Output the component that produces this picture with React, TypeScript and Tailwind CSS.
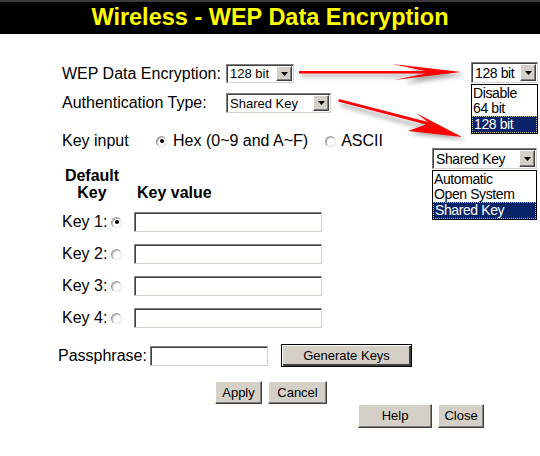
import React from "react";

const F = "font-['Liberation_Sans',Arial,sans-serif]";

function ArrowBtn({ h }: { h: number }) {
  return (
    <span
      className="flex shrink-0 items-center justify-center w-[16px] bg-[#d4d0c8] border border-t-white border-l-white border-r-[#404040] border-b-[#404040] shadow-[inset_-1px_-1px_0_#808080]"
      style={{ height: h }}
    >
      <svg width="7" height="4" viewBox="0 0 7 4">
        <polygon points="0,0 7,0 3.5,4" fill="#000" />
      </svg>
    </span>
  );
}

function Select({ w, h, text, size }: { w: number; h: number; text: string; size: string }) {
  return (
    <div
      className={`flex items-center justify-between bg-white border border-t-[#808080] border-l-[#808080] border-r-[#d4d0c8] border-b-[#d4d0c8] shadow-[inset_1px_1px_0_#404040] pl-[3px] pr-[1px] ${size}`}
      style={{ width: w, height: h }}
    >
      <span className="leading-none text-black whitespace-nowrap">{text}</span>
      <ArrowBtn h={h - 4} />
    </div>
  );
}

function TextInput({ w }: { w: number }) {
  return (
    <div
      className="h-[20px] bg-white border border-t-[#808080] border-l-[#808080] border-r-[#d4d0c8] border-b-[#d4d0c8] shadow-[inset_1px_1px_0_#404040]"
      style={{ width: w }}
    />
  );
}

function Radio({ checked }: { checked?: boolean }) {
  return (
    <span className="relative inline-flex items-center justify-center w-[11px] h-[11px] rounded-full bg-white border border-t-[#9a9a9a] border-l-[#9a9a9a] border-r-[#e0e0e0] border-b-[#e0e0e0] shadow-[inset_1px_1px_0_#b8b8b8]">
      {checked && <span className="w-[4px] h-[4px] rounded-full bg-black" />}
    </span>
  );
}

function Btn({ w, h, label, def }: { w: number; h: number; label: string; def?: boolean }) {
  return (
    <div
      className={`flex items-center justify-center bg-[#d4d0c8] text-[13px] text-black ${
        def
          ? "border border-black shadow-[inset_1px_1px_0_#fff,inset_-2px_-2px_0_#404040]"
          : "border border-t-white border-l-white border-r-[#404040] border-b-[#404040] shadow-[inset_-1px_-1px_0_#808080]"
      }`}
      style={{ width: w, height: h }}
    >
      {label}
    </div>
  );
}

function Arrows() {
  return (
    <svg className="absolute left-0 top-0" width="540" height="456" viewBox="0 0 540 456">
      <defs>
        <filter id="sh" x="-20%" y="-50%" width="140%" height="200%">
          <feGaussianBlur stdDeviation="2" />
        </filter>
      </defs>
      <g fill="#8a8a8a" opacity="0.7" filter="url(#sh)">
        <polygon points="301,74 420,74 408,67 466,75 405,84 419,77 301,77" />
        <polygon points="341,103 425,126 418,118 466,140 410,134 423,129 340,106" />
      </g>
      <polygon points="299,71 425,71 392,64 461,72 394,80 426,73.5 299,73.5" fill="#ff0000" />
      <polygon points="339,99 428,122 416,113 462,137 408,131 426,124.5 338,101.5" fill="#ff0000" />
    </svg>
  );
}

function DropOverlay({
  x, y, w, selH, listH, value, items, sel,
}: {
  x: number; y: number; w: number; selH: number; listH: number; value: string; items: string[]; sel: number;
}) {
  return (
    <div className="absolute bg-white" style={{ left: x, top: y, width: w }}>
      <div
        className="flex items-center justify-between bg-white border border-t-[#808080] border-l-[#808080] border-r-[#d4d0c8] border-b-[#d4d0c8] shadow-[inset_1px_1px_0_#404040] pl-[3px] pr-[1px] text-[14px] tracking-[-0.4px]"
        style={{ height: selH }}
      >
        <span className="leading-none text-black whitespace-nowrap">{value}</span>
        <ArrowBtn h={selH - 4} />
      </div>
      <div className="mt-[1px] border border-black bg-white flex flex-col" style={{ height: listH }}>
        {items.map((it, i) => (
          <div
            key={it}
            className={`flex-1 flex items-center pl-[1px] text-[14px] tracking-[-0.4px] leading-none whitespace-nowrap ${
              i === sel ? "bg-[#0a246a] text-white border border-dotted border-[#c8c080]" : "text-black"
            }`}
          >
            {it}
          </div>
        ))}
      </div>
    </div>
  );
}

export default function App() {
  return (
    <div className={`relative w-[540px] h-[456px] bg-white overflow-hidden ${F} text-black`}>
      <div className="h-[34px] bg-black border-t-2 border-[#3a3a3a] flex items-center justify-center">
        <span className="text-[#ffff00] font-bold text-[23.5px] leading-none">Wireless - WEP Data Encryption</span>
      </div>

      <div className="pl-[62px] pt-[30px] text-[16px]">
        <div className="flex items-center h-[19px]">
          <span className="w-[164px]">WEP Data Encryption:</span>
          <Select w={68} h={19} text="128 bit" size="text-[13px]" />
        </div>
        <div className="flex items-center h-[20px] mt-[10px]">
          <span className="w-[164px]">Authentication Type:</span>
          <Select w={105} h={20} text="Shared Key" size="text-[13px]" />
        </div>
        <div className="flex items-center h-[20px] mt-[18px]">
          <span className="w-[94px]">Key input</span>
          <Radio checked />
          <span className="ml-[6px]">Hex (0~9 and A~F)</span>
          <span className="ml-[17px] flex items-center">
            <Radio />
          </span>
          <span className="ml-[5px]">ASCII</span>
        </div>

        <div className="flex items-end mt-[16px] font-bold leading-[17px]">
          <div className="w-[64px] -ml-[2px] text-center flex flex-col">
            <span>Default</span>
            <span>Key</span>
          </div>
          <span className="ml-[13px]">Key value</span>
        </div>

        <div className="flex flex-col gap-[12px] mt-[11px]">
          {[1, 2, 3, 4].map((n) => (
            <div key={n} className="flex items-center h-[20px]">
              <span className="w-[49px]">Key {n}:</span>
              <Radio checked={n === 1} />
              <span className="ml-[12px]">
                <TextInput w={188} />
              </span>
            </div>
          ))}
        </div>

        <div className="flex items-center h-[23px] mt-[16px] -ml-[4px]">
          <span className="w-[92px]">Passphrase:</span>
          <TextInput w={118} />
          <span className="ml-[13px]">
            <Btn w={131} h={23} label="Generate Keys" def />
          </span>
        </div>

        <div className="flex h-[23px] mt-[14px] ml-[153px] gap-[6px]">
          <Btn w={47} h={23} label="Apply" />
          <Btn w={59} h={23} label="Cancel" />
        </div>

        <div className="flex h-[24px] mt-[0px] ml-[296px] gap-[6px]">
          <Btn w={74} h={24} label="Help" />
          <Btn w={46} h={24} label="Close" />
        </div>
      </div>

      <Arrows />
      <DropOverlay x={471} y={62} w={67} selH={21} listH={50} value="128 bit" items={["Disable", "64 bit", "128 bit"]} sel={2} />
      <DropOverlay x={432} y={148} w={105} selH={21} listH={50} value="Shared Key" items={["Automatic", "Open System", "Shared Key"]} sel={2} />
    </div>
  );
}
